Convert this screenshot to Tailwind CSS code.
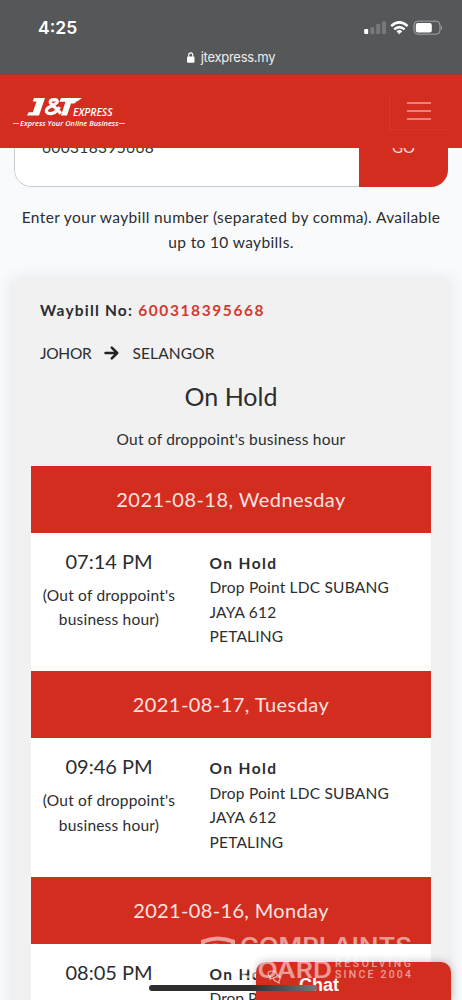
<!DOCTYPE html>
<html lang="en">
<head>
<meta charset="utf-8">
<title>J&amp;T Express</title>
<script src="https://cdn.jsdelivr.net/npm/@tailwindcss/browser@4"></script>
</head>
<body class="relative h-[1000px] w-[462px] overflow-hidden bg-[#f9fafc] font-['Lato',sans-serif] text-[15.5px] leading-[24.5px] text-[#2b2d2f]">
  <header class="relative z-10">
    <div class="flex h-[74px] flex-col bg-[#555758] text-white">
      <div class="flex h-[48px] items-center justify-between pt-[8px] pr-[19px] pl-[38px]">
        <span class="font-['Inter',sans-serif] text-[17.5px] font-semibold">4:25</span>
        <svg class="h-[16px] w-[80px]" viewBox="0 0 80 16">
          <rect x="1.2" y="9" width="4" height="5" rx="1" fill="#fff"/>
          <g fill="#77797a"><rect x="7.3" y="7" width="4" height="7" rx="1"/><rect x="13.2" y="4" width="4" height="10" rx="1"/><rect x="19" y="1.5" width="4" height="12.5" rx="1"/></g>
          <g fill="none" stroke="#fff" stroke-width="2.5"><path d="M28.2 6.2Q36.300 -1.400 44.600 6.200"/><path d="M31.200 9.400Q36.300 4.800 41.600 9.400"/></g>
          <path d="M33.500 11.300Q36.300 8.900 39.200 11.300L36.300 14.200Z" fill="#fff"/>
          <rect x="51" y="1.200" width="26" height="13" rx="3.800" fill="none" stroke="#a3a5a6"/>
          <rect x="52.800" y="3" width="16" height="9.400" rx="2" fill="#fff"/>
          <path d="M78 5.500q2 2.200 0 4.400z" fill="#a3a5a6"/>
        </svg>
      </div>
      <div class="flex items-center justify-center gap-[6px] leading-[18px]">
        <svg class="h-[11px] w-[8px]" viewBox="0 0 8 11"><rect y="4.500" width="7.500" height="6.200" rx="1" fill="#fff"/><path d="M1.700 5V3.200a2.050 2.300 0 0 1 4.100 0V5" fill="none" stroke="#fff" stroke-width="1.100"/></svg>
        <span class="font-['Inter',sans-serif] text-[13px] tracking-[-0.28px] text-[#eee]">jtexpress.my</span>
      </div>
    </div>
    <div class="flex h-[74px] items-center justify-between border-t border-[#a8352a] bg-[#d32d1f] pr-[15px] pl-[12px]">
      <svg class="h-[36px] w-[116px]" viewBox="12 93 116 36" fill="#fff">
        <path d="M34 97h11l-6 17.500H27l1.600-3.300h4.200l3.700-10.600h-3.800z"/>
        <path fill="none" stroke="#fff" stroke-width="3.200" d="M61 112.500L50.300 101.800Q49.500 98.600 54 98.600Q58.500 98.700 57 101.500Q55 104 50 105.800Q45.500 108 46.500 111Q49 114 54.500 111.500Q58 109.500 59.500 106"/>
        <path d="M61 97h21l-2.500 1.800h-2l2 .2-2.500 1.600h-2l1.500.3-2.500 1.500h-3l-4 12.100h-6l4.500-13.800h-6z"/>
        <text x="73" y="114.500" font-family="Open Sans" font-size="10" font-style="italic" font-weight="600" textLength="39.500" lengthAdjust="spacingAndGlyphs">EXPRESS</text>
        <text x="20" y="124.800" font-family="Open Sans" font-size="7.400" font-style="italic" font-weight="600" textLength="98.500" lengthAdjust="spacingAndGlyphs">Express Your Online Business</text>
        <path d="M13 122.200h6v.8h-6zM119 122.200h6v.8h-6z"/>
      </svg>
      <div class="flex h-[36px] w-[58px] items-center justify-center border border-t-0 border-r-0 border-[#d6372a]">
        <svg class="h-[20px] w-[24px]" viewBox="0 0 24 20" stroke="#ee9f96" stroke-width="1.700"><path d="M0 2h24M0 10h24M0 18h24"/></svg>
      </div>
    </div>
  </header>

  <main class="-mt-px">
    <form class="mx-[14px] -mt-[19px] flex h-[58px] overflow-hidden rounded-[17px]">
      <div class="flex-1 rounded-l-[17px] border border-r-0 border-[#c8ccd2] bg-white pt-[5px] pl-[27px] tracking-[0.35px] text-[#333]">600318395668</div>
      <div class="w-[89px] bg-[#d32d1f] pt-[6px] text-center text-[15px] text-[#f8dcd8]">GO</div>
    </form>
    <p class="mt-[18px] text-center tracking-[0.37px] whitespace-nowrap">Enter your waybill number (separated by comma). Available<br>up to 10 waybills.</p>

    <section class="mx-[13px] mt-[26px] h-[760px] rounded-[4px] bg-[#f1f1f1] px-[18px] pt-[18px] shadow-[0_0_14px_3px_#e6e9ec]">
      <p class="ml-[9px] font-bold tracking-[1.2px] whitespace-nowrap">Waybill No: <span class="tracking-[1.6px] text-[#d4392f]">600318395668</span></p>
      <p class="mt-[18px] ml-[9px] flex items-center"><span class="tracking-[-0.3px]">JOHOR</span>
        <svg class="mx-[13px] h-[14px] w-[15px]" viewBox="0 0 15 14" fill="none" stroke="#222" stroke-width="2.500" stroke-linecap="round" stroke-linejoin="round"><path d="M1.500 7h11.500M7.800 1.600L13.200 7l-5.400 5.400"/></svg>
        <span class="tracking-[0.15px]">SELANGOR</span></p>
      <h2 class="mt-[13px] text-center text-[25px] leading-[36px]">On Hold</h2>
      <p class="mt-[13px] text-center tracking-[0.2px]">Out of droppoint's business hour</p>

      <div class="mt-[14px] -mr-px flex w-[400px] flex-col">
        <h3 class="h-[67px] bg-[#d32d1f] text-center text-[20px] leading-[66px] tracking-[0.45px] text-[#fbe3e0]">2021-08-18, Wednesday</h3>
        <div class="flex h-[138.500px] bg-white pt-[16px]">
          <div class="w-[156px] text-center"><p class="text-[20px]">07:14 PM</p><p class="mt-[9.500px] tracking-[0.2px]">(Out of droppoint's<br>business hour)</p></div>
          <div class="pt-[2px] pl-[22.500px]"><p class="font-bold tracking-[1.4px]">On Hold</p><p class="tracking-[0.2px]">Drop Point LDC SUBANG<br>JAYA 612<br>PETALING</p></div>
        </div>
        <h3 class="h-[67px] bg-[#d32d1f] text-center text-[20px] leading-[66px] tracking-[0.45px] text-[#fbe3e0]">2021-08-17, Tuesday</h3>
        <div class="flex h-[138.500px] bg-white pt-[16px]">
          <div class="w-[156px] text-center"><p class="text-[20px]">09:46 PM</p><p class="mt-[9.500px] tracking-[0.2px]">(Out of droppoint's<br>business hour)</p></div>
          <div class="pt-[2px] pl-[22.500px]"><p class="font-bold tracking-[1.4px]">On Hold</p><p class="tracking-[0.2px]">Drop Point LDC SUBANG<br>JAYA 612<br>PETALING</p></div>
        </div>
        <h3 class="h-[67px] bg-[#d32d1f] text-center text-[20px] leading-[66px] tracking-[0.35px] text-[#fbe3e0]">2021-08-16, Monday</h3>
        <div class="flex h-[60px] bg-white pt-[16px]">
          <div class="w-[156px] text-center"><p class="text-[20px]">08:05 PM</p></div>
          <div class="pt-[2px] pl-[22.500px]"><p class="font-bold tracking-[1.4px]">On Hold</p><p>Drop Point</p></div>
        </div>
      </div>
    </section>
  </main>

  <div class="absolute top-[962px] left-[256px] h-[38px] w-[195px] rounded-t-[10px] bg-[#d32d1f] shadow-[0_0_8px_#0004]">
    <svg class="absolute top-[8px] left-[11px] h-[16px] w-[16px]" viewBox="0 0 16 16" fill="none" stroke="#f3b5ae" stroke-width="1.200"><path d="M1 4q0-3 4-3t5 3-4 4l-3 1 .4-2Q1 6 1 4zM10.500 5q3 1 2.500 4l-1 2v2l-2.500-1.500Q7 11 6.300 8.500"/></svg>
    <span class="absolute top-[11px] left-[43px] font-['Liberation_Sans',sans-serif] text-[18px] font-bold text-white">Chat</span>
  </div>
  <div class="absolute top-[985px] left-[149px] h-[6px] w-[168px] rounded-full bg-linear-to-r from-[#2e2e2e] from-60% to-[#777]"></div>
  <svg class="absolute top-[930px] left-[196px] h-[60px] w-[230px]" viewBox="196 930 230 60" fill="#fff" fill-opacity=".55" font-family="Inter">
    <path d="M201 940q17-7 34 0v15q-4 7-14 12q-5-2-9-6l3-2 6 4q7-4 10-10v-10q-13-5-26 0v9h-4z"/>
    <path d="M208 945q7-3 15 0l-2 3q-6-2-13 1z"/>
    <text x="240" y="953.500" font-size="22.500" font-weight="600" textLength="172" lengthAdjust="spacingAndGlyphs">COMPLAINTS</text>
    <text x="240" y="977.500" font-size="22.500" font-weight="600" textLength="92" lengthAdjust="spacingAndGlyphs">BOARD</text>
    <text x="335" y="967" font-family="Roboto" font-size="10.500" font-weight="500" textLength="76">RESOLVING</text>
    <text x="335" y="977.500" font-family="Roboto" font-size="10.500" font-weight="500" textLength="76">SINCE 2004</text>
  </svg>
</body>
</html>
